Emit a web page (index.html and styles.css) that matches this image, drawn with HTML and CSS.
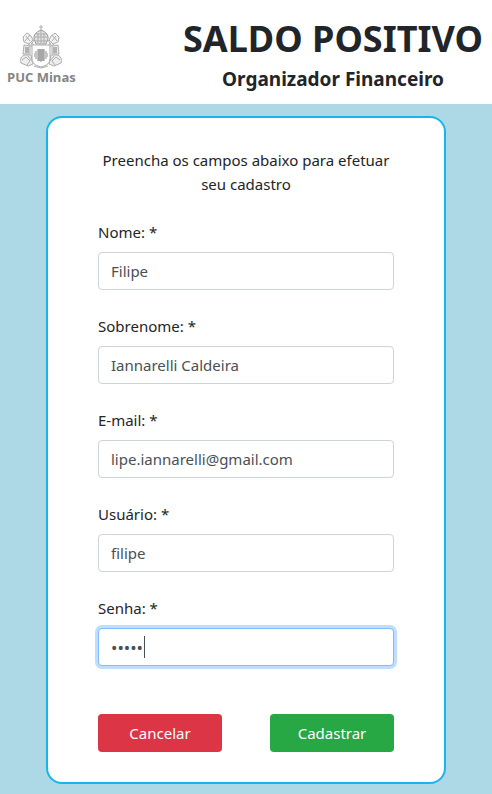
FILE: index.html
```html
<!DOCTYPE html>
<html lang="pt-BR">
<head>
<meta charset="utf-8">
<meta name="viewport" content="width=device-width, initial-scale=1">
<title>Saldo Positivo</title>
<link rel="stylesheet" href="styles.css">
</head>
<body>
<header class="header">
  <div class="logo">
    <svg class="crest" viewBox="0 0 44 44" fill="none" stroke="#adadad" stroke-width="1" aria-hidden="true">
      <path d="M22 0v6M20 2h4"/>
      <path d="M15 14q-1-6 7-9q8 3 7 9l-2 5H17z" fill="#e2e2e2" stroke="#999"/>
      <path d="M17 9h10M15 12h14M16 16h12M19 8v10M25 8v10M22 6v12"/>
      <path d="M4 12l4-4 4 3 2 4-4 4-5-2zM40 12l-4-4-4 3-2 4 4 4 5-2z" fill="#f2f2f2"/>
      <path d="M7 11l4 5M11 10l-5 6M37 11l-4 5M33 10l5 6"/>
      <path d="M11 17l5 4M33 17l-5 4M9 19l6 4M35 19l-6 4M15 15l-3 5M29 15l3 5"/>
      <path d="M5 20l6 1v8H4zM39 20l-6 1v8h7zM5 30q-5 3-3 8l7 3 5-2-2-9zM39 30q5 3 3 8l-7 3-5-2 2-9z" fill="#eee"/>
      <path d="M3 35l4-3 4 4-3 4M41 35l-4-3-4 4 3 4M9 31l4 5M35 31l-4 5M15 41l7 2 7-2"/>
      <path d="M13 20h18v14q0 6-9 8q-9-2-9-8z" fill="#fff"/>
      <path d="M6 23h4M6 25h4M6 27h4M34 23h4M34 25h4M34 27h4" stroke="#777"/>
      <path d="M18 25h8M16 27h12M15 29h14M15 31h14M16 33h12M18 35h8" stroke="#8a8a8a"/>
      <path d="M20 24v12M22 24v13M24 24v12" stroke="#8a8a8a"/>
    </svg>
    <span class="logo-name">PUC Minas</span>
  </div>
  <div class="brand">
    <h1 class="title">SALDO POSITIVO</h1>
    <p class="subtitle">Organizador Financeiro</p>
  </div>
</header>
<main class="page">
  <form class="card">
    <p class="intro">Preencha os campos abaixo para efetuar seu cadastro</p>
    <div class="field">
      <label for="nome">Nome: *</label>
      <input class="control" id="nome" type="text" value="Filipe">
    </div>
    <div class="field">
      <label for="sobrenome">Sobrenome: *</label>
      <input class="control" id="sobrenome" type="text" value="Iannarelli Caldeira">
    </div>
    <div class="field">
      <label for="email">E-mail: *</label>
      <input class="control" id="email" type="email" value="lipe.iannarelli@gmail.com">
    </div>
    <div class="field">
      <label for="usuario">Usuário: *</label>
      <input class="control" id="usuario" type="text" value="filipe">
    </div>
    <div class="field field-active">
      <label for="senha">Senha: *</label>
      <input class="control control-password" id="senha" type="password" value="12345" autofocus>
      <span class="caret" aria-hidden="true"></span>
    </div>
    <div class="actions">
      <button class="btn btn-cancel" type="button">Cancelar</button>
      <button class="btn btn-submit" type="submit">Cadastrar</button>
    </div>
  </form>
</main>
</body>
</html>
```
FILE: styles.css
```css
* {
  box-sizing: border-box;
}

body {
  margin: 0;
  background: #add8e6;
  color: #212529;
  font-family: "Noto Sans", "Liberation Sans", sans-serif;
  font-size: 15px;
  line-height: 24px;
}

h1,
p {
  margin: 0;
}

.header {
  display: flex;
  justify-content: space-between;
  align-items: center;
  padding: 15px 9px 9px 7px;
  background: #fff;
}

.logo {
  display: flex;
  flex-direction: column;
  align-items: center;
}

.crest {
  width: 44px;
  height: 44px;
}

.logo-name {
  color: #858585;
  font-family: "Open Sans", sans-serif;
  font-size: 13px;
  font-weight: 700;
  line-height: 16px;
}

.brand {
  text-align: center;
}

.title {
  font-size: 36px;
  font-weight: 700;
  line-height: 48px;
}

.subtitle {
  font-size: 19px;
  font-weight: 700;
  line-height: 32px;
}

.page {
  padding: 12px 16px 10px;
}

.card {
  max-width: 400px;
  margin: 0 auto;
  padding: 30px 50px;
  border: 2px solid #18b4f0;
  border-radius: 16px;
  background: #fff;
}

.intro {
  margin-bottom: 24px;
  text-align: center;
}

.field {
  display: flex;
  flex-direction: column;
  gap: 8px;
  margin-bottom: 24px;
}

.field-active {
  position: relative;
}

.control {
  width: 100%;
  height: 38px;
  padding: 6px 12px;
  border: 1px solid #ced4da;
  border-radius: 4px;
  background: #fff;
  color: #495057;
  font: inherit;
}

.control-password {
  font-size: 17px;
  caret-color: transparent;
}

.control:focus {
  border-color: #80bdff;
  outline: 0;
  box-shadow: 0 0 0 3px #bfdeff;
}

.caret {
  position: absolute;
  bottom: 8px;
  left: 46px;
  width: 1px;
  height: 22px;
  background: #495057;
}

.actions {
  display: grid;
  grid-template-columns: 1fr 1fr;
  gap: 48px;
  margin-top: 48px;
}

.btn {
  height: 38px;
  padding: 0 12px;
  border: 0;
  border-radius: 4px;
  color: #fff;
  font: inherit;
}

.btn-cancel {
  background: #dc3545;
}

.btn-submit {
  background: #28a745;
}
```
